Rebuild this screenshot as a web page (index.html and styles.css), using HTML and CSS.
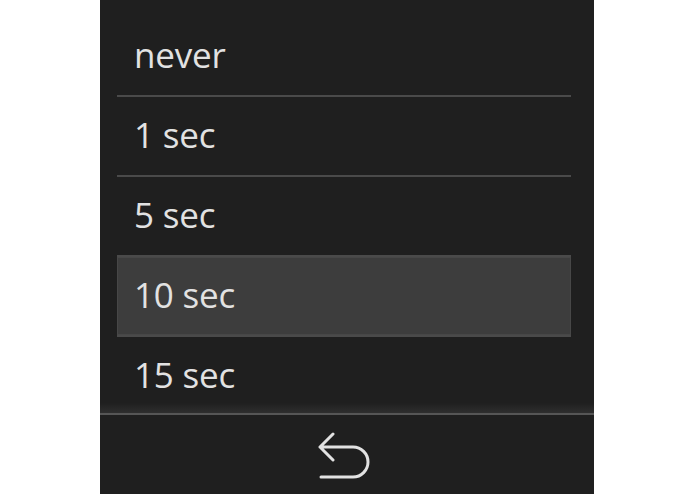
FILE: index.html
```html
<!DOCTYPE html>
<html>
<head>
<meta charset="utf-8">
<link rel="stylesheet" href="styles.css">
</head>
<body>
<div class="panel">
  <ul class="list">
    <li class="item">never</li>
    <li class="item">1 sec</li>
    <li class="item">5 sec</li>
    <li class="item selected">10 sec</li>
    <li class="item">15 sec</li>
  </ul>
  <div class="footer">
    <svg class="back" width="52" height="56" viewBox="0 0 52 56">
      <path d="M15 5 L2 18 L15 31 M2 18 H35 A15 15 0 0 1 35 48 H3" fill="none" stroke="#e2e2e2" stroke-width="3" stroke-linecap="round" stroke-linejoin="round"/>
    </svg>
  </div>
</div>
</body>
</html>
```
FILE: styles.css
```css
html, body {
  margin: 0;
  padding: 0;
  background: #ffffff;
}
.panel {
  margin-left: 100px;
  width: 494px;
  height: 494px;
  background: #1f1f1f;
  display: flex;
  flex-direction: column;
  overflow: hidden;
}
.list {
  list-style: none;
  margin: 0;
  padding: 17px 23px 0 17px;
  height: 396px;
  overflow: hidden;
  flex: none;
}
.item {
  height: 74px;
  padding-bottom: 4px;
  border-bottom: 2px solid #4a4a4a;
  display: flex;
  align-items: center;
  padding-left: 17px;
  font-family: "Open Sans", sans-serif;
  font-size: 35px;
  color: #e2e2e2;
  letter-spacing: -0.2px;
}
.item.selected {
  background: #3d3d3d;
  box-shadow: inset 0 0 0 1px #474747;
}
.footer {
  position: relative;
  flex: 1;
  border-top: 2px solid #565656;
  display: flex;
  justify-content: center;
  align-items: flex-start;
}
.footer::before {
  content: "";
  position: absolute;
  left: 0;
  right: 0;
  top: -12px;
  height: 10px;
  background: linear-gradient(to bottom, rgba(255,255,255,0), rgba(255,255,255,0.07));
}
.back {
  margin-top: 14px;
  margin-right: 7px;
}
```
